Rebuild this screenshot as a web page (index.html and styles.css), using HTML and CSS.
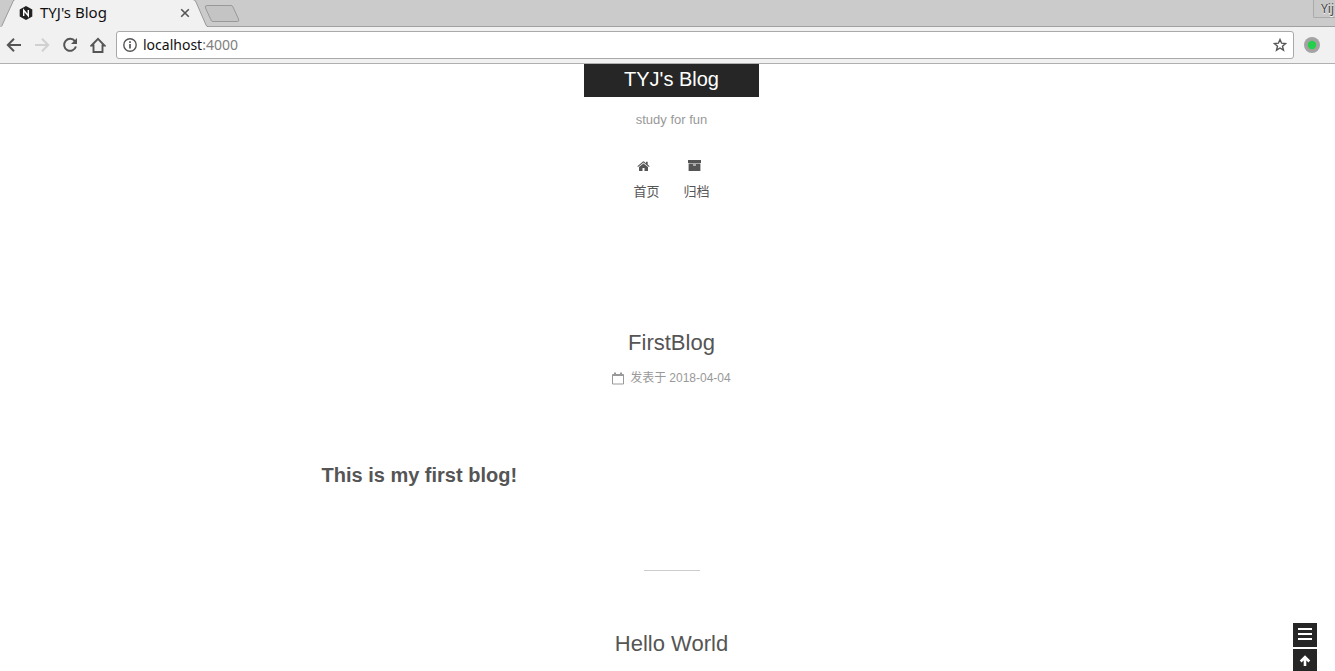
FILE: index.html
```
<!DOCTYPE html>
<html lang="zh-CN">
<head>
<meta charset="utf-8">
<title>TYJ's Blog</title>
<link rel="stylesheet" href="styles.css">
</head>
<body>
<header class="browser">
  <div class="tabstrip">
    <svg class="tab-shape" width="242" height="27" viewBox="0 0 242 27" aria-hidden="true">
      <path class="tab-fill" d="M0 27 L2 25.500 L13 1.500 Q13.500 0 15 0 H193 Q195 0 196 2 L206 25 Q206.500 26.500 208 27 Z"/>
      <path class="tab-line" d="M1.500 26.500 L13 1.500 Q13.500 -.5 15 -.5 H193 Q195 -.5 196 2 L206 25 Q206.500 26.500 208 26.500"/>
      <path class="new-tab" d="M207 5.500 H231 Q232.500 5.500 233 7 L238.500 19 Q239.500 21.500 237.500 21.500 H213 Q211.500 21.500 211 20 L205.500 8 Q204.500 5.500 207 5.500Z"/>
    </svg>
    <div class="tab">
      <svg class="favicon" width="14" height="16" viewBox="0 0 14 16" aria-hidden="true">
        <path fill="#222" d="M7 1 L13.300 4.500 V11.500 L7 15 L.7 11.500 V4.500Z"/>
        <path fill="none" stroke="#fff" stroke-width="1.400" d="M4.700 11 V5.200 L9.300 10.800 V5"/>
      </svg>
      <span class="tab-title">TYJ's Blog</span>
      <button class="plain tab-close" aria-label="Close tab">
        <svg width="10" height="10" viewBox="0 0 10 10"><path d="M1.200 1.200 L8.800 8.800 M8.800 1.200 L1.200 8.800" stroke="#555" stroke-width="1.600"/></svg>
      </button>
    </div>
    <button class="profile">Yij</button>
  </div>
  <div class="toolbar">
    <button class="plain" aria-label="Back">
      <svg width="16" height="16" viewBox="0 0 16 16"><path d="M15 8 H2 M8 1.700 L1.800 8 L8 14.300" fill="none" stroke="#555" stroke-width="2"/></svg>
    </button>
    <button class="plain" aria-label="Forward" disabled>
      <svg width="16" height="16" viewBox="0 0 16 16"><path d="M1 8 H14 M8 1.700 L14.200 8 L8 14.300" fill="none" stroke="#d0d0d0" stroke-width="2"/></svg>
    </button>
    <button class="plain" aria-label="Reload">
      <svg width="16" height="16" viewBox="0 0 16 16"><path d="M13 4.300 A6 6 0 1 0 13.900 9.500" fill="none" stroke="#555" stroke-width="2"/><path d="M15 1 V7 H9Z" fill="#555"/></svg>
    </button>
    <button class="plain" aria-label="Home">
      <svg width="16" height="16" viewBox="0 0 16 16"><path d="M1.500 8.500 L8 1.800 L14.500 8.500 H12.500 V15 H3.500 V8.500Z" fill="none" stroke="#555" stroke-width="1.900"/></svg>
    </button>
    <div class="omnibox">
      <svg width="14" height="14" viewBox="0 0 14 14" aria-hidden="true"><circle cx="7" cy="7" r="6.200" fill="none" stroke="#555" stroke-width="1.400"/><path d="M7 6 V10.500 M7 3.300 V5" stroke="#555" stroke-width="1.700"/></svg>
      <a class="url" href="#">localhost<span class="port">:4000</span></a>
      <button class="plain" aria-label="Bookmark this page">
        <svg width="14" height="14" viewBox="0 0 14 14"><path d="M7 1.500 L8.600 5.200 L12.600 5.500 L9.500 8.200 L10.500 12.200 L7 10 L3.500 12.200 L4.500 8.200 L1.400 5.500 L5.400 5.200Z" fill="none" stroke="#555" stroke-width="1.400"/></svg>
      </button>
    </div>
    <button class="plain" aria-label="Extension">
      <svg width="16" height="16" viewBox="0 0 16 16"><circle cx="8" cy="8" r="8" fill="#a3a3a3"/><circle cx="8" cy="8" r="4.200" fill="#25cf4a"/></svg>
    </button>
  </div>
</header>
<main class="page">
  <div class="masthead">
    <a class="brand" href="#">TYJ's Blog</a>
    <p class="subtitle">study for fun</p>
    <nav class="menu">
      <a class="menu-link" href="#">
        <svg width="13" height="14" viewBox="0 0 13 14" aria-hidden="true"><path fill="#555" d="M6.500 4.400 L11 8.100 V11.500 Q11 12 10.500 12 H7.500 V9 H5.500 V12 H2.500 Q2 12 2 11.500 V8.100Z M.4 7.200 L6 2.500 Q6.500 2.100 7 2.500 L9 4.200 V2.700 H10.700 V5.600 L12.600 7.200 L12 7.900 L6.500 3.400 L1 7.900Z"/></svg>
        <span>首页</span>
      </a>
      <a class="menu-link" href="#">
        <svg width="13" height="14" viewBox="0 0 13 14" aria-hidden="true"><path fill="#555" fill-rule="evenodd" d="M0 1 H13 V4 H0Z M.6 4.400 H12.400 V12 H.6Z M5 5.500 V6.500 H8 V5.500Z"/></svg>
        <span>归档</span>
      </a>
    </nav>
  </div>
  <article class="post">
    <h1 class="post-title"><a href="#">FirstBlog</a></h1>
    <p class="post-meta">
      <svg width="12" height="13" viewBox="0 0 12 13" aria-hidden="true"><path fill="none" stroke="#999" d="M.5 2.500 H11.500 V12 H.5Z"/><path fill="#999" d="M2 .5 H4 V4 H2Z M8 .5 H10 V4 H8Z M1 2 H11 V4 H1Z"/></svg>
      <span>发表于</span><time datetime="2018-04-04">2018-04-04</time>
    </p>
    <h2 class="post-heading">This is my first blog!</h2>
  </article>
  <hr class="divider">
  <article class="post">
    <h1 class="post-title"><a href="#">Hello World</a></h1>
  </article>
</main>
<div class="float-tools">
  <button class="tool" aria-label="Sidebar">
    <svg width="14" height="14" viewBox="0 0 14 14"><path d="M0 1 H14 M0 6 H14 M0 11 H14" stroke="#fff" stroke-width="2"/></svg>
  </button>
  <button class="tool" aria-label="Back to top">
    <svg width="12" height="12" viewBox="0 0 12 12"><path d="M6 11 V3 M1.700 6.500 L6 2.200 L10.300 6.500" fill="none" stroke="#fff" stroke-width="2.600"/></svg>
  </button>
</div>
</body>
</html>
```
FILE: styles.css
```
* { box-sizing: border-box; }

body {
  margin: 0;
  height: 100vh;
  display: flex;
  flex-direction: column;
  overflow: hidden;
  background: #fff;
  color: #555;
  font-family: "Liberation Sans", "Noto Sans CJK SC", sans-serif;
}

a { color: inherit; text-decoration: none; }
h1, h2, p { margin: 0; }
svg { display: block; flex: none; }

.plain {
  border: 0;
  padding: 0;
  background: none;
}

/* Browser window */
.browser {
  flex: none;
  font-family: "Noto Sans", sans-serif;
  font-size: 14px;
}

.tabstrip {
  position: relative;
  display: flex;
  justify-content: space-between;
  align-items: flex-start;
  height: 27px;
  background: #cbcbcb;
  border-bottom: 1px solid #a0a0a0;
}

.tab-shape {
  position: absolute;
  left: 0;
  top: 0;
}

.tab-fill { fill: #f1f1f1; }
.tab-line { fill: none; stroke: #999; }
.new-tab { fill: #c4c4c4; stroke: #999; }

.tab {
  position: relative;
  display: flex;
  align-items: center;
  width: 190px;
  height: 26px;
  padding-left: 19px;
  color: #111;
  font-size: 15px;
}

.tab-title {
  margin-left: 7px;
  padding-bottom: 2px;
}

.tab-close { margin-left: auto; }

.profile {
  position: relative;
  width: 22px;
  height: 18px;
  padding: 0 0 0 7px;
  border: 1px solid #aaa;
  border-top: 0;
  border-right: 0;
  border-radius: 0 0 0 2px;
  background: #c8c8c8;
  color: #444;
  font: 12px "Noto Sans", sans-serif;
  text-align: left;
  text-shadow: 0 1px #fff;
}

.toolbar {
  display: flex;
  align-items: center;
  gap: 12px;
  height: 37px;
  padding: 0 15px 0 6px;
  background: #f1f1f1;
  border-bottom: 1px solid #b0b0b0;
}

.omnibox {
  flex: 1;
  display: flex;
  align-items: center;
  gap: 6px;
  height: 28px;
  margin: 0 -2px;
  padding: 0 6px;
  background: #fff;
  border: 1px solid #a9a9a9;
  border-radius: 3px;
}

.url {
  flex: 1;
  padding-bottom: 2px;
  color: #111;
}

.port { color: #808080; }

/* Blog page */
.page {
  flex: 1;
  min-height: 0;
  overflow: hidden;
  padding-left: 8px;
}

.masthead {
  display: flex;
  flex-direction: column;
  align-items: center;
}

.brand {
  padding: 0 40px 3px;
  background: #262626;
  color: #fff;
  font-size: 20px;
  line-height: 30px;
}

.subtitle {
  margin-top: 13px;
  color: #999;
  font-size: 13px;
  line-height: 20px;
}

.menu {
  display: flex;
  gap: 24px;
  margin-top: 29px;
  font-size: 13px;
  line-height: 20px;
}

.menu-link {
  display: flex;
  flex-direction: column;
  gap: 9px;
}

.menu-link svg { margin-left: 4px; }

.post {
  max-width: 700px;
  margin: 0 auto;
}

.masthead + .post { margin-top: 126px; }

.post-title {
  font-size: 22px;
  font-weight: 400;
  line-height: 30px;
  text-align: center;
}

.post-meta {
  display: flex;
  justify-content: center;
  align-items: center;
  margin-top: 10px;
  color: #999;
  font-size: 12px;
  line-height: 20px;
}

.post-meta span { margin: 0 3px 0 6px; }

.post-heading {
  margin-top: 72px;
  font-size: 20px;
  line-height: 30px;
}

.divider {
  width: 56px;
  height: 1px;
  margin: 80px auto 58px;
  border: 0;
  background: #ccc;
}

/* Buttons floating over the page corner */
.float-tools {
  position: fixed;
  right: 18px;
  bottom: -2px;
  display: flex;
  flex-direction: column;
  gap: 2px;
}

.tool {
  display: flex;
  justify-content: center;
  align-items: center;
  width: 24px;
  height: 24px;
  padding: 0;
  border: 0;
  background: #262626;
}
```
